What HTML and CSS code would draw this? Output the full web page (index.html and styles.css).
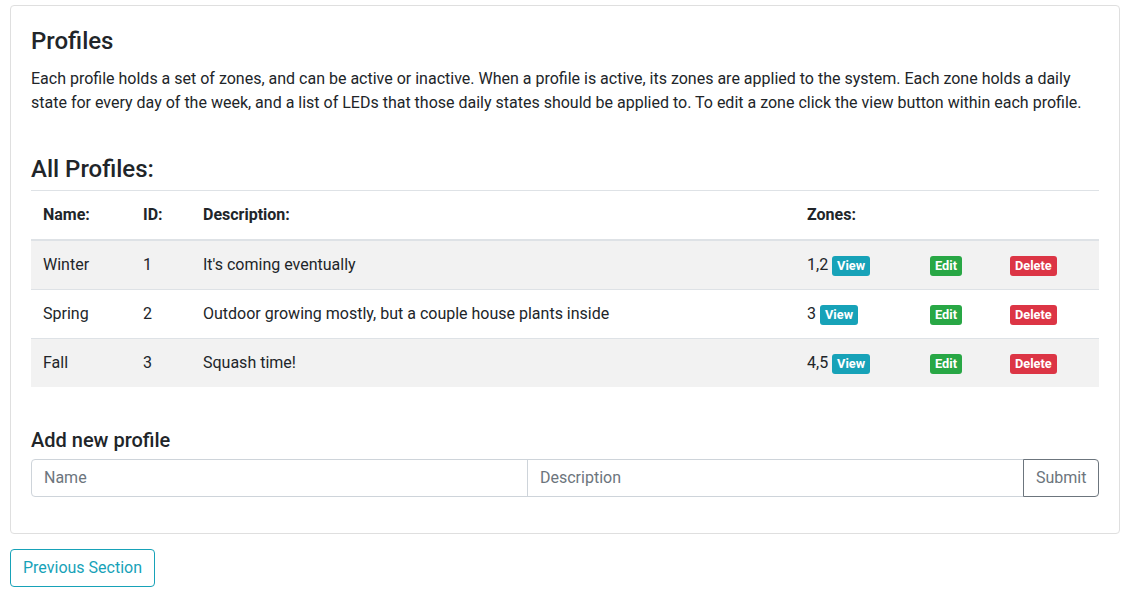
FILE: index.html
```html
<!DOCTYPE html>
<html lang="en">
<head>
<meta charset="utf-8">
<title>Profiles</title>
<link rel="stylesheet" href="styles.css">
</head>
<body>
<div class="page">
  <div class="card">
    <h4 class="title">Profiles</h4>
    <p class="intro">Each profile holds a set of zones, and can be active or inactive. When a profile is active, its zones are applied to the system. Each zone holds a daily state for every day of the week, and a list of LEDs that those daily states should be applied to. To edit a zone click the view button within each profile.</p>
    <h4 class="title all">All Profiles:</h4>
    <table class="table">
      <thead>
        <tr>
          <th class="c-name">Name:</th>
          <th class="c-id">ID:</th>
          <th class="c-desc">Description:</th>
          <th class="c-zones">Zones:</th>
          <th class="c-edit"></th>
          <th class="c-del"></th>
        </tr>
      </thead>
      <tbody>
        <tr class="odd">
          <td>Winter</td><td>1</td><td>It's coming eventually</td>
          <td>1,2 <span class="badge info">View</span></td>
          <td><span class="badge success">Edit</span></td>
          <td><span class="badge danger">Delete</span></td>
        </tr>
        <tr>
          <td>Spring</td><td>2</td><td>Outdoor growing mostly, but a couple house plants inside</td>
          <td>3 <span class="badge info">View</span></td>
          <td><span class="badge success">Edit</span></td>
          <td><span class="badge danger">Delete</span></td>
        </tr>
        <tr class="odd">
          <td>Fall</td><td>3</td><td>Squash time!</td>
          <td>4,5 <span class="badge info">View</span></td>
          <td><span class="badge success">Edit</span></td>
          <td><span class="badge danger">Delete</span></td>
        </tr>
      </tbody>
    </table>
    <h5 class="subtitle">Add new profile</h5>
    <form class="input-group">
      <input class="field first" type="text" placeholder="Name">
      <input class="field" type="text" placeholder="Description">
      <button class="submit" type="button">Submit</button>
    </form>
  </div>
  <button class="prev" type="button">Previous Section</button>
</div>
</body>
</html>
```

FILE: styles.css
```css
* { box-sizing: border-box; }
html, body { margin: 0; padding: 0; background: #fff; }
body {
  font-family: Roboto, "Liberation Sans", Arial, sans-serif;
  font-size: 16px;
  line-height: 1.5;
  color: #212529;
}
.page { padding: 5px 6px 0 10px; }
.card {
  border: 1px solid #dfdfdf;
  border-radius: 4px;
  padding: 21px 20px 0 20px;
}
.title {
  font-size: 24px;
  font-weight: 500;
  line-height: 1.2;
  margin: 0 0 11px 0;
}
.intro { margin: 0 0 16px 0; }
.all { margin-top: 40px; margin-bottom: 6px; }
.table {
  width: 100%;
  border-collapse: collapse;
  margin-bottom: 16px;
}
.table th, .table td {
  padding: 12px;
  text-align: left;
  vertical-align: top;
  border-top: 1px solid #dee2e6;
  line-height: 24px;
}
.table thead th {
  font-weight: 700;
  border-bottom: 2px solid #dee2e6;
}
.table tr.odd td { background: #f2f2f2; }
.c-name { width: 100px; }
.c-id { width: 60px; }
.c-desc { width: 604px; }
.c-zones { width: 123px; }
.c-edit { width: 80px; }
.badge {
  display: inline-block;
  font-size: 12.8px;
  font-weight: 700;
  line-height: 12px;
  padding: 4px 5px;
  border-radius: 3px;
  color: #fff;
  vertical-align: 0;
}
.info { background: #17a2b8; }
.success { background: #28a745; }
.danger { background: #dc3545; }
.subtitle {
  font-size: 20px;
  font-weight: 500;
  line-height: 1.2;
  margin: 41px 0 7px 0;
}
.input-group {
  display: flex;
  margin: 0 0 36px 0;
}
.field {
  flex: 1 1 0;
  min-width: 0;
  height: 38px;
  padding: 6px 12px;
  font-family: inherit;
  font-size: 16px;
  color: #495057;
  border: 1px solid #ced4da;
  border-radius: 0;
  margin-left: -1px;
  background: #fff;
}
.field.first { margin-left: 0; border-radius: 4px 0 0 4px; }
.field::placeholder { color: #6c757d; opacity: 1; }
.submit {
  height: 38px;
  width: 76px;
  margin-left: -1px;
  padding: 6px 12px;
  font-family: inherit;
  font-size: 16px;
  color: #6c757d;
  background: #fff;
  border: 1px solid #6c757d;
  border-radius: 0 4px 4px 0;
}
.prev {
  margin-top: 15px;
  height: 38px;
  padding: 6px 12px;
  font-family: inherit;
  font-size: 16px;
  line-height: 24px;
  color: #17a2b8;
  background: #fff;
  border: 1px solid #17a2b8;
  border-radius: 4px;
}
```
